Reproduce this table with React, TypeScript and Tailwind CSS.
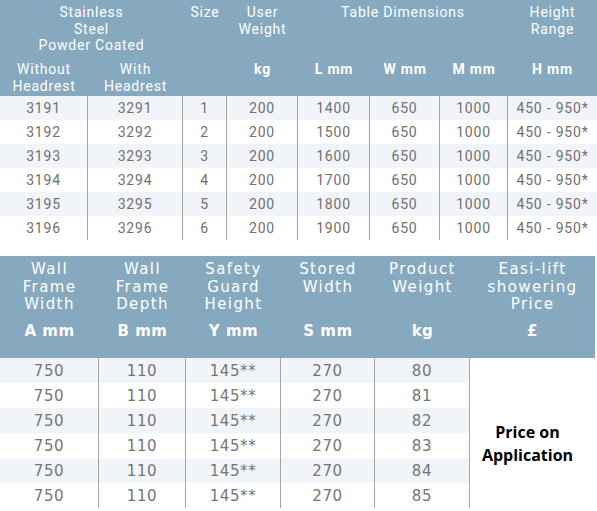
const topRows = [
  ["3191", "3291", "1", "200", "1400", "650", "1000", "450 - 950*"],
  ["3192", "3292", "2", "200", "1500", "650", "1000", "450 - 950*"],
  ["3193", "3293", "3", "200", "1600", "650", "1000", "450 - 950*"],
  ["3194", "3294", "4", "200", "1700", "650", "1000", "450 - 950*"],
  ["3195", "3295", "5", "200", "1800", "650", "1000", "450 - 950*"],
  ["3196", "3296", "6", "200", "1900", "650", "1000", "450 - 950*"],
];

const bottomRows = [
  ["750", "110", "145**", "270", "80"],
  ["750", "110", "145**", "270", "81"],
  ["750", "110", "145**", "270", "82"],
  ["750", "110", "145**", "270", "83"],
  ["750", "110", "145**", "270", "84"],
  ["750", "110", "145**", "270", "85"],
];

const topCols = "grid grid-cols-[88px_95px_44px_71px_72px_70px_68px_89px]";
const bottomCols = "grid grid-cols-[99px_87px_95px_94px_95px]";

export default function App() {
  return (
    <div className="w-[597px] h-[511px] bg-white overflow-hidden">
      {/* top table */}
      <div className="font-['Roboto',sans-serif] text-[14px] tracking-[0.8px]">
        <div className={`${topCols} grid-rows-[57px_35px] pt-[4px] h-[96px] bg-[#86a9c0] text-white leading-[16.5px] text-center`}>
          <div className="col-span-2">Stainless<br />Steel<br />Powder Coated</div>
          <div>Size</div>
          <div>User<br />Weight</div>
          <div className="col-span-3">Table Dimensions</div>
          <div>Height<br />Range</div>
          <div>Without<br />Headrest</div>
          <div>With<br />Headrest</div>
          <div></div>
          <div className="font-bold">kg</div>
          <div className="font-bold">L mm</div>
          <div className="font-bold">W mm</div>
          <div className="font-bold">M mm</div>
          <div className="font-bold">H mm</div>
        </div>
        {topRows.map((r, i) => (
          <div key={i} className={`${topCols} h-[24px] ${i % 2 === 0 ? "bg-[#f1f5f9]" : "bg-white"} text-[#707070]`}>
            {r.map((c, j) => (
              <div key={j} className={`flex items-center justify-center pt-[1px] ${j < 7 ? "border-r border-[#a5a5a5]" : ""}`}>
                {c}
              </div>
            ))}
          </div>
        ))}
      </div>

      {/* bottom table */}
      <div className="mt-[16px] w-[595px] font-['DejaVu_Sans',sans-serif]">
        <div className="grid grid-cols-[99px_87px_95px_94px_95px_125px] grid-rows-[62px_35px] pt-[5px] h-[102px] bg-[#86a9c0] text-white text-[15px] leading-[17.5px] tracking-[1.4px] text-center">
          <div>Wall<br />Frame<br />Width</div>
          <div>Wall<br />Frame<br />Depth</div>
          <div>Safety<br />Guard<br />Height</div>
          <div>Stored<br />Width</div>
          <div>Product<br />Weight</div>
          <div>Easi-lift<br />showering<br />Price</div>
          <div className="font-bold tracking-[0.5px]">A mm</div>
          <div className="font-bold tracking-[0.5px]">B mm</div>
          <div className="font-bold tracking-[0.5px]">Y mm</div>
          <div className="font-bold tracking-[0.5px]">S mm</div>
          <div className="font-bold tracking-[0.5px]">kg</div>
          <div className="font-bold tracking-[0.5px]">£</div>
        </div>
        <div className="flex">
          <div className="w-[470px]">
            {bottomRows.map((r, i) => (
              <div key={i} className={`${bottomCols} h-[25px] ${i % 2 === 0 ? "bg-[#f1f5f9]" : "bg-white"} text-[#757575] text-[15px] tracking-[0.6px]`}>
                {r.map((c, j) => (
                  <div key={j} className="flex items-center justify-center pt-[2px] border-r border-[#a5a5a5]">
                    {c}
                  </div>
                ))}
              </div>
            ))}
          </div>
          <div className="flex-1 pt-[63px] pr-[10px] text-center font-['Open_Sans',sans-serif] font-bold text-[16px] leading-[23px] text-black">
            Price on<br />Application
          </div>
        </div>
      </div>
    </div>
  );
}
